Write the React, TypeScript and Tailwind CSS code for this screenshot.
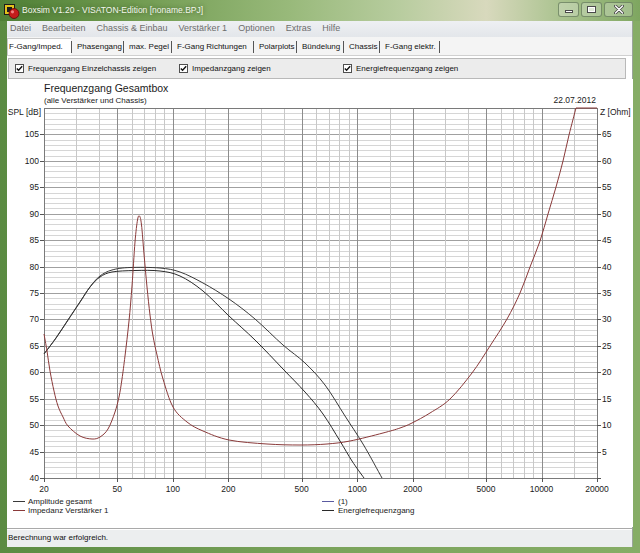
import React from 'react';

type Pt = [number, number];

// plot geometry (page pixels)
const LEFT = 44;
const RIGHT = 597;
const TOP = 109;
const BOTTOM = 479;

const X = (f: number) => LEFT + ((RIGHT - LEFT) / 3) * Math.log10(f / 20);
const Y = (db: number) => TOP + ((110 - db) * (BOTTOM - TOP)) / 70;
const px = (v: number) => Math.round(v) + 0.5;

const smooth = (pts: Pt[]) => {
    let d = `M${pts[0][0]},${pts[0][1]}`;
    for (let i = 0; i < pts.length - 1; i++) {
        const p0 = pts[i - 1] || pts[i];
        const p1 = pts[i];
        const p2 = pts[i + 1];
        const p3 = pts[i + 2] || p2;
        const c1x = p1[0] + (p2[0] - p0[0]) / 6;
        const c1y = p1[1] + (p2[1] - p0[1]) / 6;
        const c2x = p2[0] - (p3[0] - p1[0]) / 6;
        const c2y = p2[1] - (p3[1] - p1[1]) / 6;
        d += ` C${c1x.toFixed(1)},${c1y.toFixed(1)} ${c2x.toFixed(1)},${c2y.toFixed(1)} ${p2[0]},${p2[1]}`;
    }
    return d;
};

const lowEnd: Pt[] = [
    [44, 355], [56, 339], [68, 321], [80, 303], [90, 288],
];

const amplitude: Pt[] = [
    ...lowEnd,
    [100, 277], [112, 271], [130, 268.5], [160, 269], [180, 273], [203, 284], [229, 300],
    [255, 320], [283, 346], [305, 364], [325, 386], [345, 417], [363, 445], [382, 479],
];

const energie: Pt[] = [
    ...lowEnd,
    [100, 278], [112, 273], [135, 271.5], [160, 272], [180, 277], [203, 292], [229, 317],
    [255, 341], [283, 370], [305, 393], [323, 415], [340, 442], [352, 462], [364, 479],
];

const impedanz: Pt[] = [
    [44, 335], [47, 352], [50, 372], [54, 392], [58, 407], [63, 418], [68, 427], [80, 437], [92, 440], [100, 438],
    [108, 430], [115, 413], [119, 398], [122, 380], [125, 357], [129, 322], [132, 287], [135, 243], [137.5, 221],
    [139.5, 217], [141.5, 226], [144, 255], [147, 288], [150, 316], [153, 337], [157, 356], [163, 380],
    [173, 408], [187, 423], [203, 432], [229, 441], [267, 445], [300, 446], [327, 445], [350, 442], [383, 434],
    [400, 429], [412, 424], [430, 414], [450, 400], [472, 374], [490, 347], [507, 320], [520, 294], [530, 268],
    [540, 242], [548, 215], [556, 188], [563, 162], [569, 136], [576, 109],
];

const gridFreqs: number[] = [];
[10, 100, 1000, 10000].forEach((dec) => {
    [1, 1.5, 2, 3, 4, 5, 6, 7, 8, 9].forEach((m) => {
        const f = m * dec;
        if (f > 20 && f < 20000) gridFreqs.push(f);
    });
});
const majorFreqs = [50, 100, 200, 500, 1000, 2000, 5000, 10000];
const freqLabels = [20, 50, 100, 200, 500, 1000, 2000, 5000, 10000, 20000];

function Chart() {
    const hLines = [];
    for (let db = 41; db < 110; db++) {
        hLines.push(
            <line
                key={`h${db}`}
                x1={LEFT}
                x2={RIGHT}
                y1={px(Y(db))}
                y2={px(Y(db))}
                stroke={db % 5 === 0 ? '#a0a0a0' : '#d6d6d6'}
            />
        );
    }

    return (
        <svg
            width={626}
            height={448}
            viewBox="7 80 626 448"
            className="block font-['Liberation_Sans',Arial,sans-serif]"
        >
            <rect x={7} y={80} width={626} height={448} fill="#ffffff" />

            {/* titles */}
            <text x={44} y={93} fontSize={10.5} fill="#1a1a1a">Frequenzgang Gesamtbox</text>
            <text x={44} y={104} fontSize={8} fill="#1a1a1a">(alle Verstärker und Chassis)</text>
            <text x={596} y={104} fontSize={8.5} fill="#1a1a1a" textAnchor="end">22.07.2012</text>
            <text x={41} y={116} fontSize={8.5} fill="#1a1a1a" textAnchor="end">SPL [dB]</text>
            <text x={600} y={116} fontSize={8.5} fill="#1a1a1a">Z [Ohm]</text>

            {/* grid */}
            <g shapeRendering="crispEdges">
                {hLines}
                {gridFreqs.map((f) => (
                    <line
                        key={`v${f}`}
                        x1={px(X(f))}
                        x2={px(X(f))}
                        y1={TOP}
                        y2={BOTTOM}
                        stroke={majorFreqs.includes(f) ? '#8c8c8c' : '#c8c8c8'}
                    />
                ))}
                <rect x={px(LEFT)} y={px(TOP)} width={RIGHT - LEFT} height={BOTTOM - TOP} fill="none" stroke="#7a7a7a" />

                {/* ticks */}
                {Array.from({ length: 14 }, (_, i) => 40 + i * 5).map((db) => (
                    <g key={`t${db}`}>
                        <line x1={40} x2={LEFT} y1={px(Y(db))} y2={px(Y(db))} stroke="#555" />
                        <line x1={RIGHT} x2={RIGHT + 4} y1={px(Y(db))} y2={px(Y(db))} stroke="#555" />
                    </g>
                ))}
                {freqLabels.map((f) => (
                    <line key={`bt${f}`} x1={px(X(f))} x2={px(X(f))} y1={BOTTOM} y2={BOTTOM + 4} stroke="#555" />
                ))}
            </g>

            {/* axis labels */}
            {Array.from({ length: 14 }, (_, i) => 40 + i * 5).map((db) => (
                <text key={`l${db}`} x={39} y={Y(db) + 3} fontSize={8.5} fill="#1a1a1a" textAnchor="end">
                    {db}
                </text>
            ))}
            {Array.from({ length: 13 }, (_, i) => 5 + i * 5).map((z) => (
                <text key={`r${z}`} x={602} y={Y(z + 40) + 3} fontSize={8.5} fill="#1a1a1a">
                    {z}
                </text>
            ))}
            {freqLabels.map((f) => (
                <text key={`fl${f}`} x={X(f)} y={493} fontSize={8.5} fill="#1a1a1a" textAnchor="middle">
                    {f}
                </text>
            ))}

            {/* curves */}
            <path d={smooth(energie)} fill="none" stroke="#2a2a2a" strokeWidth={1} />
            <path d={smooth(amplitude)} fill="none" stroke="#3a3a3a" strokeWidth={1} />
            <path d={`${smooth(impedanz)} L597,109`} fill="none" stroke="#8a3a3a" strokeWidth={1} />

            {/* legend */}
            <g shapeRendering="crispEdges">
                <line x1={13} x2={25} y1={502.5} y2={502.5} stroke="#3a3a3a" />
                <line x1={13} x2={25} y1={511.5} y2={511.5} stroke="#8a3a3a" />
                <line x1={322} x2={334} y1={502.5} y2={502.5} stroke="#5a5aa0" />
                <line x1={322} x2={334} y1={511.5} y2={511.5} stroke="#2a2a2a" />
            </g>
            <text x={28} y={505} fontSize={8} fill="#1a1a1a">Amplitude gesamt</text>
            <text x={28} y={514} fontSize={8} fill="#1a1a1a">Impedanz Verstärker 1</text>
            <text x={338} y={505} fontSize={8} fill="#1a1a1a">(1)</text>
            <text x={338} y={514} fontSize={8} fill="#1a1a1a">Energiefrequenzgang</text>
        </svg>
    );
}

function AppIcon() {
    return (
        <svg width={17} height={16} viewBox="0 0 17 16">
            <rect x={1.5} y={1.5} width={10} height={10} fill="#e2c21c" stroke="#1c1c1c" />
            <rect x={4} y={4} width={5} height={5} fill="#1c1c1c" />
            <circle cx={11} cy={10.5} r={5} fill="#c41c1c" stroke="#5a0808" strokeWidth={0.8} />
            <circle cx={9.5} cy={8.8} r={1.6} fill="#f08080" />
        </svg>
    );
}

function CaptionButton({ kind }: { kind: 'min' | 'max' | 'close' }) {
    return (
        <div
            className={`h-[15px] flex items-center justify-center rounded-[3px] border border-[#5d7452]/70 bg-white/25 ${
                kind === 'close' ? 'w-[29px]' : 'w-[21px]'
            }`}
        >
            {kind === 'min' && <div className="mt-[5px] w-[8px] h-[3px] bg-white border border-[#4a4a4a]" />}
            {kind === 'max' && <div className="w-[9px] h-[7px] border border-[#4a4a4a] bg-white/60 shadow-[inset_0_0_0_1px_#ffffff]" />}
            {kind === 'close' && (
                <svg width={10} height={9} viewBox="0 0 10 9">
                    <path d="M1.5 1 L8.5 8 M8.5 1 L1.5 8" stroke="#4a4a4a" strokeWidth={3} strokeLinecap="round" />
                    <path d="M1.5 1 L8.5 8 M8.5 1 L1.5 8" stroke="#ffffff" strokeWidth={1.4} strokeLinecap="round" />
                </svg>
            )}
        </div>
    );
}

function CheckBox({ label }: { label: string }) {
    return (
        <div className="flex items-center gap-[4px]">
            <div className="w-[9px] h-[9px] border border-[#4f4f4f] bg-white flex items-center justify-center">
                <svg width={7} height={7} viewBox="0 0 7 7">
                    <path d="M0.8 3.4 L2.6 5.3 L6.2 1.2" fill="none" stroke="#111" strokeWidth={1.4} />
                </svg>
            </div>
            <span className="text-[8px] text-[#111]">{label}</span>
        </div>
    );
}

const menuItems = ['Datei', 'Bearbeiten', 'Chassis & Einbau', 'Verstärker 1', 'Optionen', 'Extras', 'Hilfe'];

const tabs: { label: string; w: string }[] = [
    { label: 'Phasengang', w: 'w-[52px]' },
    { label: 'max. Pegel', w: 'w-[48px]' },
    { label: 'F-Gang Richtungen', w: 'w-[82px]' },
    { label: 'Polarplots', w: 'w-[43px]' },
    { label: 'Bündelung', w: 'w-[47px]' },
    { label: 'Chassis', w: 'w-[36px]' },
    { label: 'F-Gang elektr.', w: 'w-[60px]' },
];

export default function App() {
    return (
        <div className="w-[640px] h-[553px] flex flex-col overflow-hidden bg-gradient-to-r from-[#5b8b42] via-[#7aa35b] to-[#86ad66] font-['Liberation_Sans',Arial,sans-serif]">
            {/* Title bar */}
            <div className="h-[21px] shrink-0 flex items-center bg-[linear-gradient(90deg,#4f7f36_0%,#6f9a4f_20%,#98b97a_45%,#b7cc9e_62%,#d8d9bd_76%,#a9c28e_88%,#7ea660_100%)]">
                <div className="ml-[3px] mt-[1px]">
                    <AppIcon />
                </div>
                <span className="ml-[2px] text-[8.5px] text-[#f3f6ec] [text-shadow:0_0_4px_rgba(60,90,40,0.9)]">
                    Boxsim V1.20 - VISATON-Edition [noname.BPJ]
                </span>
                <div className="ml-auto mr-[7px] -mt-[3px] flex gap-[2px]">
                    <CaptionButton kind="min" />
                    <CaptionButton kind="max" />
                    <CaptionButton kind="close" />
                </div>
            </div>

            {/* Client area */}
            <div className="flex-1 mx-[7px] mb-[6px] flex flex-col bg-[#f0f0f0] border-r border-[#9aa59a]">
                {/* Menu */}
                <div className="h-[16px] shrink-0 flex items-center gap-[11px] pl-[3px] bg-gradient-to-b from-[#eef0f3] to-[#e3e6ea] text-[9px] text-[#6d6d6d]">
                    {menuItems.map((m) => (
                        <span key={m}>{m}</span>
                    ))}
                </div>

                {/* Tabs */}
                <div className="h-[18px] shrink-0 flex items-end bg-[#f4f4f4] text-[8px] text-[#111]">
                    <div className="h-[17px] w-[64px] flex items-center pl-[1px] bg-white border-t border-l border-[#c8c8c8]">
                        F-Gang/Imped.
                    </div>
                    {tabs.map((t) => (
                        <div key={t.label} className={`h-[16px] ${t.w} flex items-center`}>
                            <div className="w-px h-[12px] bg-[#555] mr-[5px]" />
                            <span className="whitespace-nowrap">{t.label}</span>
                        </div>
                    ))}
                    <div className="h-[16px] flex items-center">
                        <div className="w-px h-[12px] bg-[#555]" />
                    </div>
                </div>

                {/* Tab page */}
                <div className="flex-1 flex flex-col bg-white border-t border-[#d0d0d0]">
                    <div className="h-[21px] mt-[2px] ml-[1px] mr-[6px] flex items-center bg-[#ececec] border border-[#b9b9b9]">
                        <div className="w-[164px] pl-[6px]">
                            <CheckBox label="Frequenzgang Einzelchassis zeigen" />
                        </div>
                        <div className="w-[164px] pl-[6px]">
                            <CheckBox label="Impedanzgang zeigen" />
                        </div>
                        <div className="pl-[6px]">
                            <CheckBox label="Energiefrequenzgang zeigen" />
                        </div>
                    </div>
                    <Chart />
                </div>

                {/* Status bar */}
                <div className="h-[19px] shrink-0 flex items-center pl-[1px] border-t border-[#a9a9a9] shadow-[inset_0_1px_0_#ffffff] bg-[#eceeef] text-[8px] text-[#111]">
                    Berechnung war erfolgreich.
                </div>
            </div>
        </div>
    );
}
